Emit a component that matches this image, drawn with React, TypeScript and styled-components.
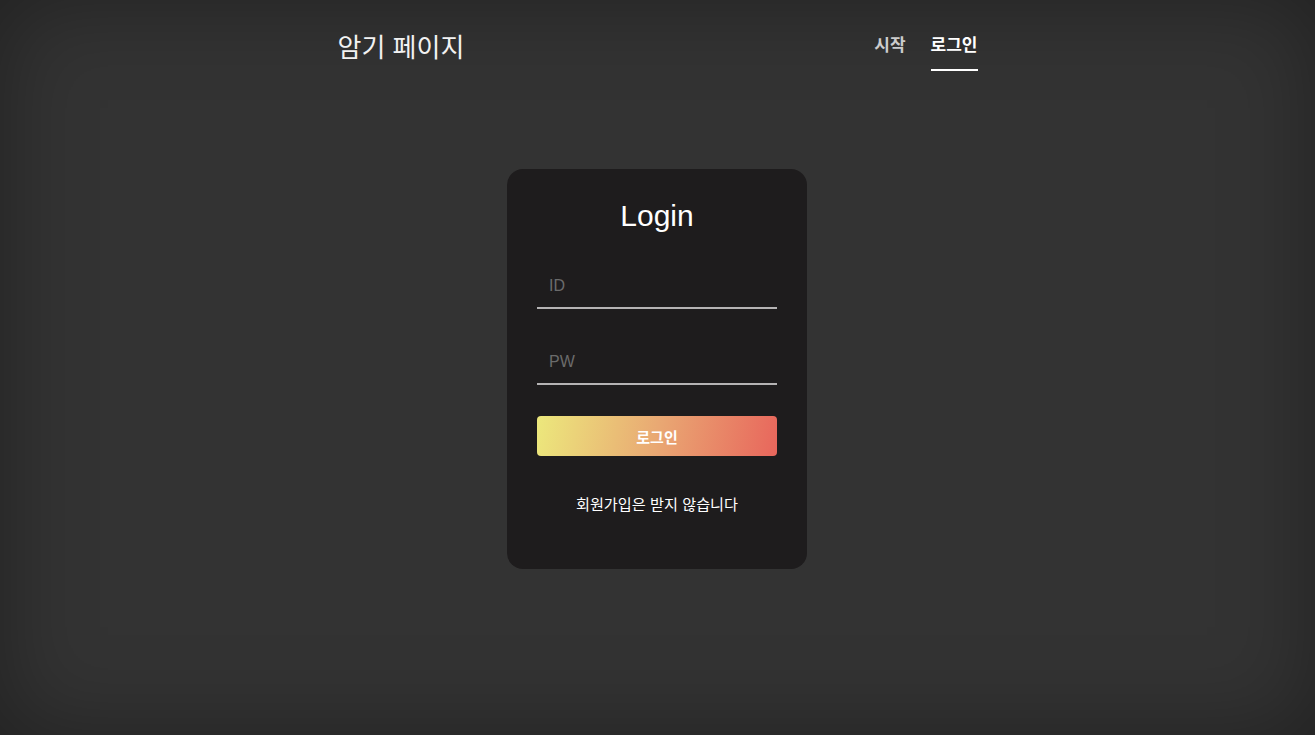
import styled, { createGlobalStyle } from "styled-components";

const GlobalStyle = createGlobalStyle`
  html, body {
    margin: 0;
    padding: 0;
    height: 100%;
  }

  body {
    background-color: #333333;
    font-family: "Liberation Sans", "Noto Sans CJK KR", sans-serif;
    color: #ffffff;
  }

  * {
    box-sizing: border-box;
  }
`;

const App = () => {
  return (
    <>
      <GlobalStyle />
      <Page>
        <Header>
          <Title>암기 페이지</Title>
          <Nav>
            <NavLink href="#">시작</NavLink>
            <NavLink href="#" $active>
              로그인
            </NavLink>
          </Nav>
        </Header>
        <Main>
          <Card>
            <CardTitle>Login</CardTitle>
            <Form onSubmit={(e) => e.preventDefault()}>
              <Input type="text" placeholder="ID" />
              <Input type="password" placeholder="PW" />
              <SubmitBtn type="submit">로그인</SubmitBtn>
            </Form>
            <Notice>회원가입은 받지 않습니다</Notice>
          </Card>
        </Main>
      </Page>
    </>
  );
};

export default App;

const Page = styled.div`
  min-height: 100vh;
  display: flex;
  flex-direction: column;
  background-color: #333333;
  box-shadow: inset 0 0 90px rgba(0, 0, 0, 0.35);
`;

const Header = styled.header`
  width: 640px;
  height: 92px;
  margin: 0 auto;
  display: flex;
  justify-content: space-between;
  align-items: center;
`;

const Title = styled.h1`
  margin: 4px 0 0;
  font-size: 26px;
  font-weight: 400;
  line-height: 32px;
  color: #f2f2f2;
`;

const Nav = styled.nav`
  align-self: flex-start;
  display: flex;
  gap: 25px;
`;

const NavLink = styled.a<{ $active?: boolean }>`
  display: block;
  padding: 34px 0 12px;
  font-size: 17px;
  font-weight: 700;
  line-height: 23px;
  text-decoration: none;
  color: ${({ $active }) => ($active ? "#ffffff" : "#cccccc")};
  border-bottom: 2px solid ${({ $active }) => ($active ? "#ffffff" : "transparent")};
`;

const Main = styled.main`
  flex: 1;
  display: flex;
  justify-content: center;
  align-items: flex-start;
  padding: 77px 1px 0 0;
`;

const Card = styled.div`
  width: 300px;
  height: 400px;
  padding: 30px 30px 0;
  background-color: #1e1c1d;
  border-radius: 16px;
  display: flex;
  flex-direction: column;
`;

const CardTitle = styled.h2`
  margin: 0;
  font-size: 30px;
  font-weight: 400;
  line-height: 34px;
  text-align: center;
  color: #ffffff;
`;

const Form = styled.form`
  margin-top: 28px;
  display: flex;
  flex-direction: column;
  gap: 28px;
`;

const Input = styled.input`
  width: 100%;
  height: 48px;
  padding: 3px 12px 0;
  background: transparent;
  border: none;
  border-bottom: 2px solid #b5b3b4;
  outline: none;
  font-family: "Liberation Sans", "Noto Sans CJK KR", sans-serif;
  font-size: 16px;
  color: #ffffff;

  &::placeholder {
    color: #6b6b6b;
  }
`;

const SubmitBtn = styled.button`
  margin-top: 3px;
  height: 40px;
  border: none;
  border-radius: 4px;
  background: linear-gradient(100deg, #ece87c 0%, #e9a873 50%, #e8665c 100%);
  font-family: "Noto Sans CJK KR", sans-serif;
  font-size: 15px;
  font-weight: 700;
  color: #ffffff;
  cursor: pointer;

  &:hover {
    filter: brightness(95%);
  }
`;

const Notice = styled.p`
  margin: 39px 0 0;
  font-size: 15.2px;
  line-height: 20px;
  text-align: center;
  color: #ffffff;
`;
